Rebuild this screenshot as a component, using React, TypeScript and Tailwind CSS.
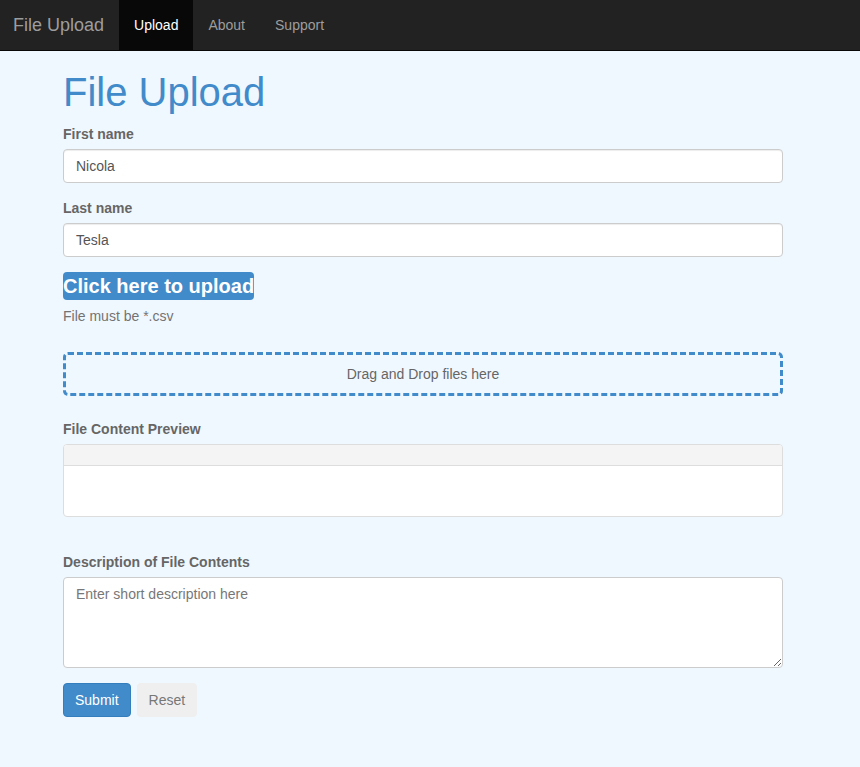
import React from "react";

export default function App() {
  const font = { fontFamily: '"Liberation Sans", Arial, Helvetica, sans-serif' };
  return (
    <div className="min-h-[767px] bg-[#f0f8ff] text-[14px] leading-[20px] text-[#333]" style={font}>
      <nav className="h-[51px] bg-[#222222] border-b border-[#080808] flex items-stretch">
        <div className="pl-[13px] pr-[15px] flex items-center text-[18px] text-[#9d9d9d]">File Upload</div>
        <div className="px-[15px] flex items-center bg-[#080808] text-white">Upload</div>
        <div className="px-[15px] flex items-center text-[#9d9d9d]">About</div>
        <div className="px-[15px] flex items-center text-[#9d9d9d]">Support</div>
      </nav>
      <div className="ml-[63px] w-[720px]">
        <h1 className="mt-[19px] mb-[10px] text-[40px] leading-[44px] text-[#428bca] font-normal">File Upload</h1>
        <div className="mb-[15px]">
          <label className="block mb-[5px] font-bold text-[#666]">First name</label>
          <input
            className="block w-full h-[34px] px-[12px] py-[6px] bg-white border border-[#ccc] rounded-[4px] text-[#555] outline-none shadow-[inset_0_1px_1px_rgba(0,0,0,0.075)]"
            defaultValue="Nicola"
          />
        </div>
        <div className="mb-[15px]">
          <label className="block mb-[5px] font-bold text-[#666]">Last name</label>
          <input
            className="block w-full h-[34px] px-[12px] py-[6px] bg-white border border-[#ccc] rounded-[4px] text-[#555] outline-none shadow-[inset_0_1px_1px_rgba(0,0,0,0.075)]"
            defaultValue="Tesla"
          />
        </div>
        <div>
          <span className="inline-block bg-[#428bca] text-white font-bold text-[20px] leading-[28px] rounded-[4px]">
            Click here to upload
          </span>
        </div>
        <p className="mt-[6px] mb-[10px] text-[#737373]">File must be *.csv</p>
        <div className="mt-[26px] h-[44px] border-[3px] border-dashed border-[#428bca] rounded-[5px] flex items-center justify-center text-[#666]">
          Drag and Drop files here
        </div>
        <div className="mt-[23px]">
          <label className="block mb-[5px] font-bold text-[#666]">File Content Preview</label>
          <div className="border border-[#ddd] rounded-[4px] bg-white overflow-hidden">
            <div className="h-[21px] bg-[#f4f4f4] border-b border-[#ddd]"></div>
            <div className="h-[50px]"></div>
          </div>
        </div>
        <div className="mt-[35px]">
          <label className="block mb-[5px] font-bold text-[#666]">Description of File Contents</label>
          <textarea
            className="block w-full h-[91px] px-[12px] py-[6px] bg-white border border-[#ccc] rounded-[4px] text-[#555] placeholder:text-[#777] outline-none"
            placeholder="Enter short description here"
          />
        </div>
        <div className="mt-[15px] flex gap-[6px]">
          <button className="h-[34px] px-[11px] bg-[#428bca] border border-[#357ebd] rounded-[4px] text-white">Submit</button>
          <button className="h-[34px] px-[11px] bg-[#efefef] border border-[#efefef] rounded-[4px] text-[#777]">Reset</button>
        </div>
      </div>
    </div>
  );
}
